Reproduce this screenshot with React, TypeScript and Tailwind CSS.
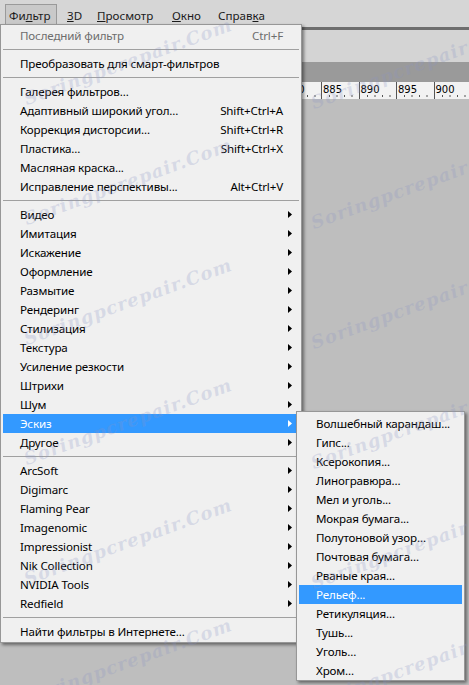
import React from "react";

type Item = { label: string; shortcut?: string; disabled?: boolean; sub?: boolean; active?: boolean };
type Row = Item | "sep";

const font = { fontFamily: '"Noto Sans", "Open Sans", sans-serif' };

const mainMenu: Row[] = [
  { label: "Последний фильтр", shortcut: "Ctrl+F", disabled: true },
  "sep",
  { label: "Преобразовать для смарт-фильтров" },
  "sep",
  { label: "Галерея фильтров..." },
  { label: "Адаптивный широкий угол...", shortcut: "Shift+Ctrl+A" },
  { label: "Коррекция дисторсии...", shortcut: "Shift+Ctrl+R" },
  { label: "Пластика...", shortcut: "Shift+Ctrl+X" },
  { label: "Масляная краска..." },
  { label: "Исправление перспективы...", shortcut: "Alt+Ctrl+V" },
  "sep",
  { label: "Видео", sub: true },
  { label: "Имитация", sub: true },
  { label: "Искажение", sub: true },
  { label: "Оформление", sub: true },
  { label: "Размытие", sub: true },
  { label: "Рендеринг", sub: true },
  { label: "Стилизация", sub: true },
  { label: "Текстура", sub: true },
  { label: "Усиление резкости", sub: true },
  { label: "Штрихи", sub: true },
  { label: "Шум", sub: true },
  { label: "Эскиз", sub: true, active: true },
  { label: "Другое", sub: true },
  "sep",
  { label: "ArcSoft", sub: true },
  { label: "Digimarc", sub: true },
  { label: "Flaming Pear", sub: true },
  { label: "Imagenomic", sub: true },
  { label: "Impressionist", sub: true },
  { label: "Nik Collection", sub: true },
  { label: "NVIDIA Tools", sub: true },
  { label: "Redfield", sub: true },
  "sep",
  { label: "Найти фильтры в Интернете..." },
];

const sketchMenu: Item[] = [
  { label: "Волшебный карандаш..." },
  { label: "Гипс..." },
  { label: "Ксерокопия..." },
  { label: "Линогравюра..." },
  { label: "Мел и уголь..." },
  { label: "Мокрая бумага..." },
  { label: "Полутоновой узор..." },
  { label: "Почтовая бумага..." },
  { label: "Рваные края..." },
  { label: "Рельеф...", active: true },
  { label: "Ретикуляция..." },
  { label: "Тушь..." },
  { label: "Уголь..." },
  { label: "Хром..." },
];

function Arrow({ white }: { white?: boolean }) {
  return (
    <svg width="4" height="7" viewBox="0 0 4 7" className="shrink-0">
      <path d="M0 0 L4 3.5 L0 7 Z" fill={white ? "#ffffff" : "#000000"} />
    </svg>
  );
}

function MenuRow({ item }: { item: Item }) {
  return (
    <div
      className={`flex items-center h-[19px] pl-[17px] pr-[7px] text-[11.6px] tracking-[-0.15px] leading-none ${
        item.active ? "bg-[#3399ff] text-white" : item.disabled ? "text-[#6d6d6d]" : "text-black"
      }`}
    >
      <span className="flex-1 whitespace-nowrap">{item.label}</span>
      {item.shortcut && <span className="whitespace-nowrap mr-[9px]">{item.shortcut}</span>}
      {item.sub && <Arrow white={item.active} />}
    </div>
  );
}

function Separator() {
  return (
    <div className="h-[9px] flex items-center">
      <div className="h-px w-full bg-[#a0a0a0]" />
    </div>
  );
}

function TopItem({ w, active, children }: { w: string; active?: boolean; children: React.ReactNode }) {
  return (
    <div
      className={`${w} h-[23px] flex items-center px-[3px] text-[11.6px] text-[#1b1b1b] ${
        active ? "bg-[#c9c9c9] border border-b-0 border-[#9a9a9a] px-[2px]" : ""
      }`}
    >
      {children}
    </div>
  );
}

function RulerCell({ n }: { n?: number }) {
  return (
    <div className="w-[37.5px] shrink-0 h-full border-l border-[#555] flex flex-col justify-between pt-[3px]">
      <span className="pl-[1px] text-[10px] leading-none text-black" style={{ fontFamily: '"DejaVu Sans", sans-serif' }}>
        {n ?? ""}
      </span>
      <svg width="37" height="3" className="mb-[2px]">
        {[7.5, 15, 22.5, 30].map((x) => (
          <line key={x} x1={x} y1="0" x2={x} y2="3" stroke="#555" strokeWidth="1" />
        ))}
      </svg>
    </div>
  );
}

function Watermark({ x, y }: { x: number; y: number }) {
  return (
    <span
      aria-hidden="true"
      className="absolute pointer-events-none whitespace-nowrap italic font-bold text-[18px] text-[#8a94c4]/25 -rotate-[20deg]"
      style={{ left: x, top: y, fontFamily: '"DejaVu Serif", serif', letterSpacing: "1px" }}
    >
      Soringpcrepair.Com
    </span>
  );
}

export default function App() {
  const rows = [0, 1, 2, 3, 4, 5];
  return (
    <div className="relative w-[469px] h-[685px] overflow-hidden bg-[#bebebe] flex flex-col" style={font}>
      {/* menubar */}
      <div className="h-[27px] bg-[#d6d6d6] flex items-start pt-[4px] pl-[5px]">
        <TopItem w="w-[52px]" active>
          <span>
            Фи<u>л</u>ьтр
          </span>
        </TopItem>
        <div className="w-[7px]" />
        <TopItem w="w-[30px]">
          <span>
            <u>3</u>D
          </span>
        </TopItem>
        <TopItem w="w-[75px]">
          <span>
            <u>П</u>росмотр
          </span>
        </TopItem>
        <TopItem w="w-[46px]">
          <span>
            <u>О</u>кно
          </span>
        </TopItem>
        <TopItem w="w-[60px]">
          <span>
            Справ<u>к</u>а
          </span>
        </TopItem>
      </div>
      <div className="h-[3px] bg-[#6e6e6e]" />
      <div className="h-[32px] bg-[#d4d4d4]" />
      <div className="h-[20px] bg-[#9a9a9a]" />
      <div className="h-[17px] bg-[#f2f2f2] flex pl-[21px] overflow-hidden">
        {Array.from({ length: 12 }).map((_, i) => (
          <RulerCell key={i} n={845 + i * 5} />
        ))}
      </div>
      <div className="flex-1 bg-[#bebebe]" />

      {/* Filter dropdown */}
      <div className="absolute left-0 top-[24px] w-[302px] bg-[#f0f0f0] border border-[#979797] px-[2px] pt-[1px] pb-[1px] shadow-[2px_2px_3px_rgba(0,0,0,0.45)]">
        {mainMenu.map((r, i) => (r === "sep" ? <Separator key={i} /> : <MenuRow key={i} item={r} />))}
      </div>

      {/* Sketch submenu */}
      <div className="absolute left-[296px] top-[411px] w-[169px] bg-[#f0f0f0] border border-[#979797] px-[2px] pt-[2px] shadow-[2px_2px_3px_rgba(0,0,0,0.45)]">
        {sketchMenu.map((r, i) => (
          <MenuRow key={i} item={r} />
        ))}
      </div>

      {rows.map((k) => (
        <React.Fragment key={k}>
          <Watermark x={18} y={48 + k * 120} />
          <Watermark x={305} y={52 + k * 120} />
        </React.Fragment>
      ))}
    </div>
  );
}
